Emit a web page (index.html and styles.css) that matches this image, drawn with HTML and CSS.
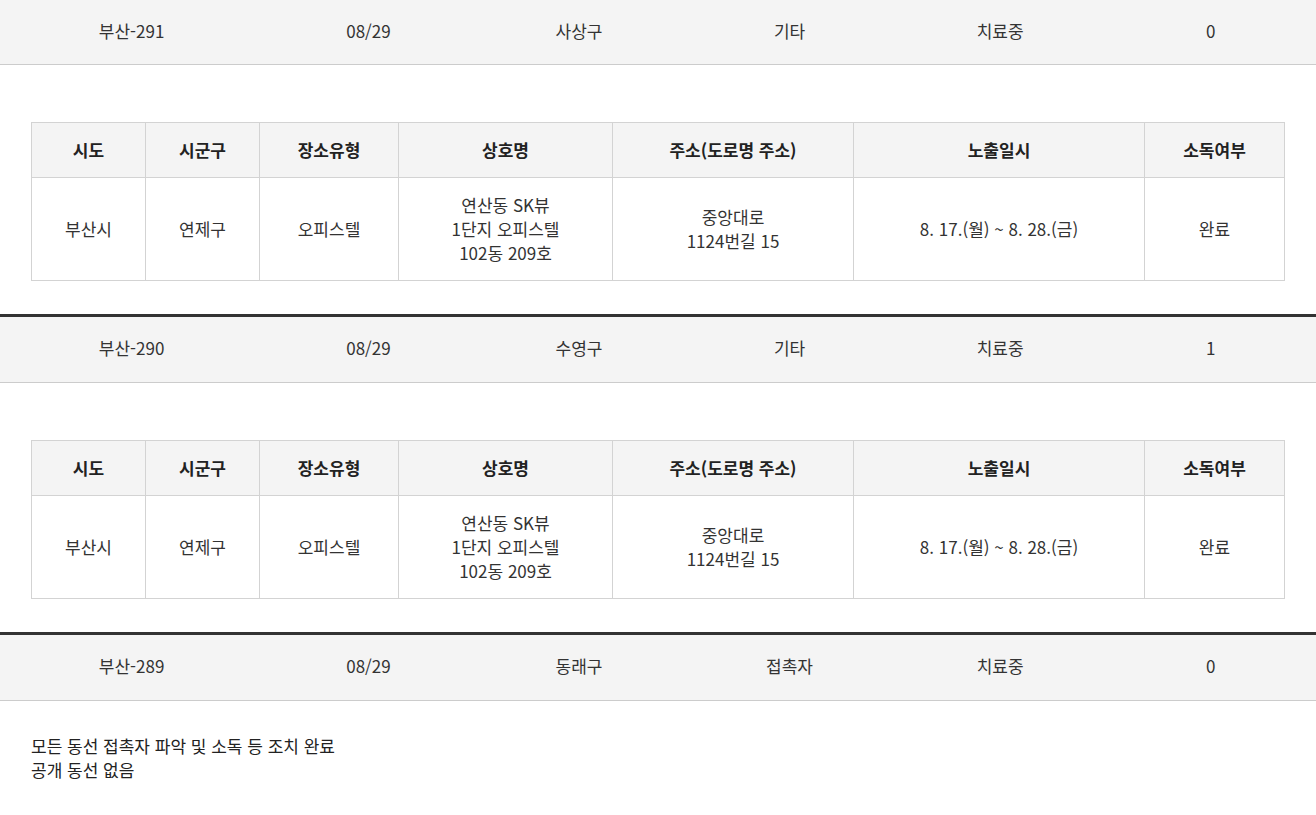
FILE: index.html
```html
<!DOCTYPE html>
<html lang="ko">
<head>
<meta charset="utf-8">
<title>확진자 이동경로</title>
<link rel="stylesheet" href="styles.css">
</head>
<body>
<div class="list">
  <div class="summary summary-first">
    <div class="c c1">부산-291</div>
    <div class="c">08/29</div>
    <div class="c">사상구</div>
    <div class="c">기타</div>
    <div class="c">치료중</div>
    <div class="c">0</div>
  </div>
  <div class="detail">
    <p class="blank">&nbsp;</p>
    <table class="route">
      <colgroup>
        <col class="w114"><col class="w114"><col class="w139"><col class="w214"><col class="w241"><col class="w291"><col class="w140">
      </colgroup>
      <thead>
        <tr><th>시도</th><th>시군구</th><th>장소유형</th><th>상호명</th><th>주소(도로명 주소)</th><th>노출일시</th><th>소독여부</th></tr>
      </thead>
      <tbody>
        <tr><td>부산시</td><td>연제구</td><td>오피스텔</td><td>연산동 SK뷰<br>1단지 오피스텔<br>102동 209호</td><td>중앙대로<br>1124번길 15</td><td>8. 17.(월) ~ 8. 28.(금)</td><td>완료</td></tr>
      </tbody>
    </table>
  </div>

  <div class="summary">
    <div class="c c1">부산-290</div>
    <div class="c">08/29</div>
    <div class="c">수영구</div>
    <div class="c">기타</div>
    <div class="c">치료중</div>
    <div class="c">1</div>
  </div>
  <div class="detail">
    <p class="blank">&nbsp;</p>
    <table class="route">
      <colgroup>
        <col class="w114"><col class="w114"><col class="w139"><col class="w214"><col class="w241"><col class="w291"><col class="w140">
      </colgroup>
      <thead>
        <tr><th>시도</th><th>시군구</th><th>장소유형</th><th>상호명</th><th>주소(도로명 주소)</th><th>노출일시</th><th>소독여부</th></tr>
      </thead>
      <tbody>
        <tr><td>부산시</td><td>연제구</td><td>오피스텔</td><td>연산동 SK뷰<br>1단지 오피스텔<br>102동 209호</td><td>중앙대로<br>1124번길 15</td><td>8. 17.(월) ~ 8. 28.(금)</td><td>완료</td></tr>
      </tbody>
    </table>
  </div>

  <div class="summary">
    <div class="c c1">부산-289</div>
    <div class="c">08/29</div>
    <div class="c">동래구</div>
    <div class="c">접촉자</div>
    <div class="c">치료중</div>
    <div class="c">0</div>
  </div>
  <div class="detail">
    <p class="note">모든 동선 접촉자 파악 및 소독 등 조치 완료<br>공개 동선 없음</p>
  </div>
</div>
</body>
</html>
```
FILE: styles.css
```css
html, body {
  margin: 0;
  padding: 0;
  background: #fff;
}
body {
  font-family: "Noto Sans CJK KR", "Noto Sans", sans-serif;
  font-size: 17px;
  line-height: 24px;
  color: #333;
}
.list {
  width: 1316px;
}
.summary {
  display: grid;
  grid-template-columns: 20% repeat(5, 16%);
  align-items: center;
  height: 62px;
  padding-bottom: 3px;
  background: #f4f4f4;
  border-top: 3px solid #333;
  border-bottom: 1px solid #cccccc;
}
.summary-first {
  border-top: 0;
  height: 61px;
}
.summary .c {
  text-align: center;
  color: #333;
}
.detail {
  padding: 33px 32px 33px 31px;
}
.blank {
  margin: 0;
  height: 24px;
}
.note {
  margin: 0;
  color: #222;
}
.route {
  width: 1253px;
  table-layout: fixed;
  border-collapse: collapse;
}
.w114 { width: 114px; }
.w139 { width: 139px; }
.w214 { width: 214px; }
.w241 { width: 241px; }
.w291 { width: 291px; }
.w140 { width: 140px; }
.route th,
.route td {
  border: 1px solid #d3d3d3;
  text-align: center;
  vertical-align: middle;
  padding: 15px 6px;
}
.route th {
  background: #f4f4f4;
  font-weight: 700;
  color: #222;
}
.route td {
  color: #333;
  padding-top: 15px;
  padding-bottom: 15px;
}
```
